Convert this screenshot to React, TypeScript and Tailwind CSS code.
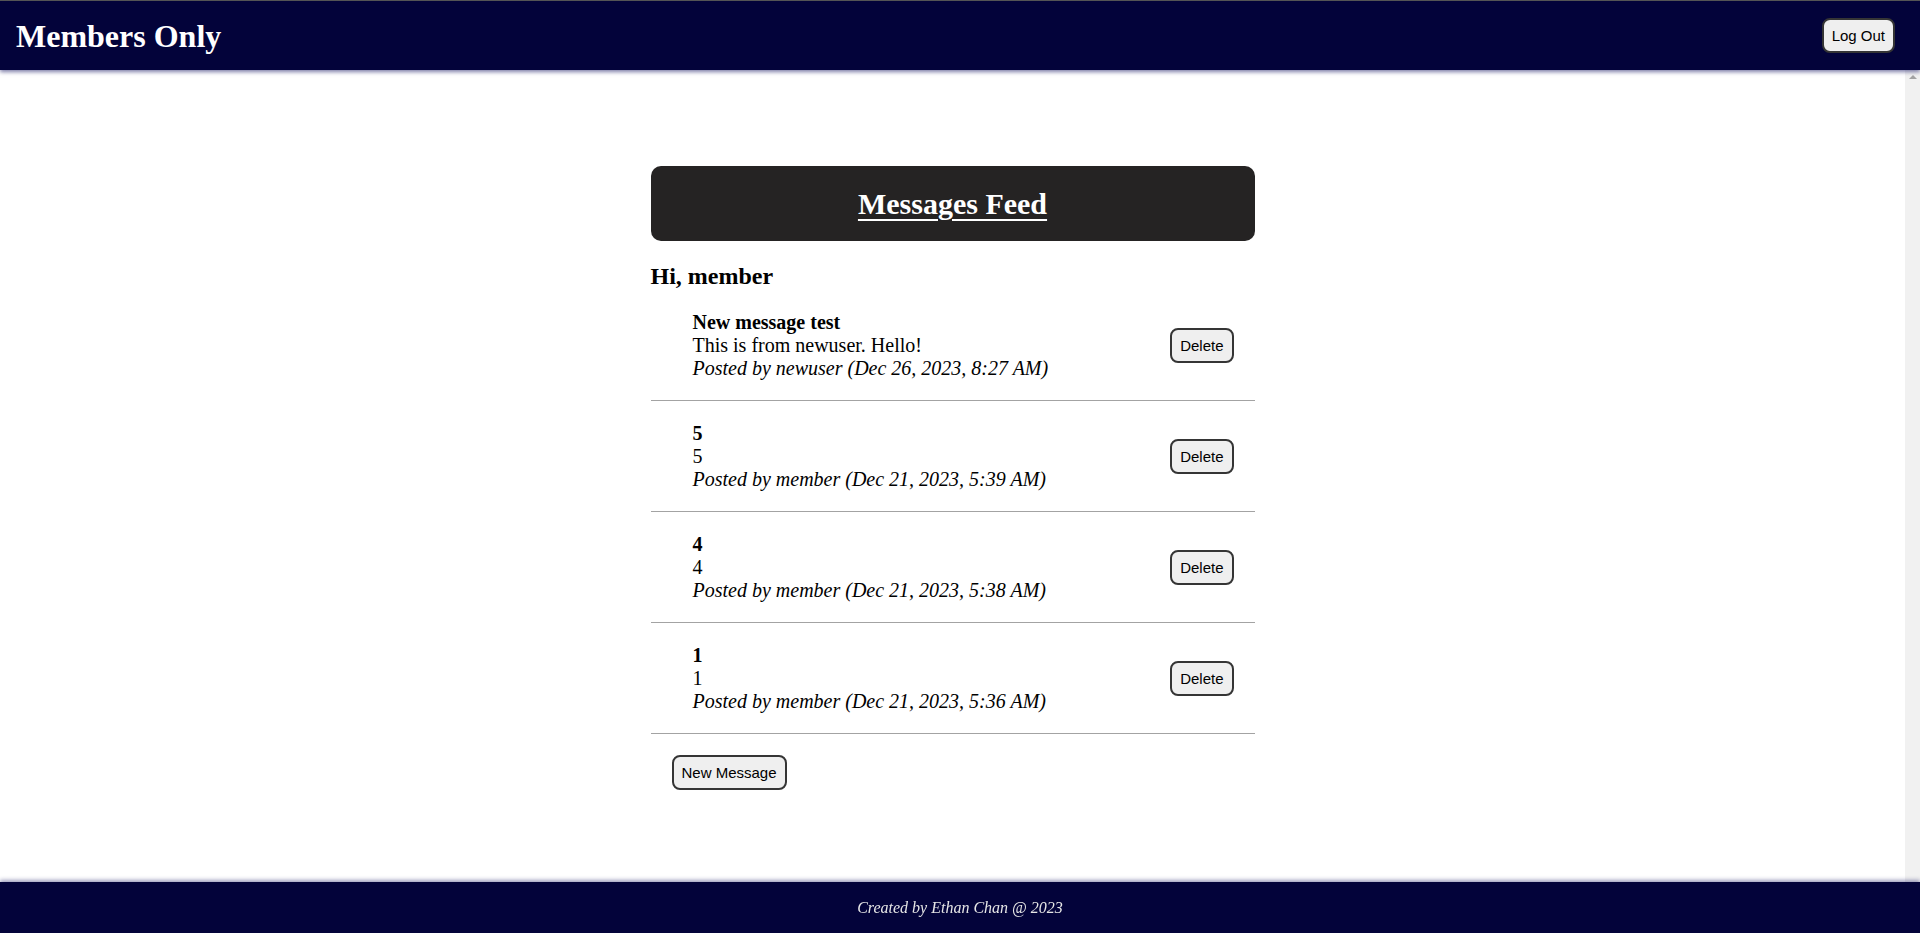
const messages = [
  { id: 1, title: 'New message test', body: 'This is from newuser. Hello!', author: 'newuser', date: 'Dec 26, 2023, 8:27 AM' },
  { id: 2, title: '5', body: '5', author: 'member', date: 'Dec 21, 2023, 5:39 AM' },
  { id: 3, title: '4', body: '4', author: 'member', date: 'Dec 21, 2023, 5:38 AM' },
  { id: 4, title: '1', body: '1', author: 'member', date: 'Dec 21, 2023, 5:36 AM' },
]

const btn =
  "rounded-[8px] border-2 border-[#353535] bg-[#efefef] px-[8px] py-[7px] font-['Liberation_Sans',Arial,sans-serif] text-[15px] leading-[17px] text-black"

function MessageRow({ title, body, author, date }: { title: string; body: string; author: string; date: string }) {
  return (
    <li className="flex items-center justify-between border-b border-[#a3a3a3] pt-[21px] pb-[20px] pl-[42px] pr-[21px]">
      <div className="text-[20px] leading-[23px]">
        <div className="font-bold">{title}</div>
        <div>{body}</div>
        <div className="italic">
          Posted by {author} ({date})
        </div>
      </div>
      <button className={btn}>Delete</button>
    </li>
  )
}

export default function App() {
  return (
    <div className="h-screen overflow-hidden bg-white font-['Liberation_Serif','Times_New_Roman',serif] text-black">
      {/* Header */}
      <header className="relative z-10 flex h-[70px] items-center justify-between border-t border-[#555] bg-[#03033a] pl-4 pr-[25px] shadow-[0_2px_4px_rgba(40,40,110,0.6)]">
        <h1 className="text-[32px] font-bold leading-none text-white">Members Only</h1>
        <button className={btn}>Log Out</button>
      </header>

      {/* Main area + scrollbar track */}
      <div className="flex h-[calc(100vh-70px)]">
        <main className="flex-1 overflow-hidden">
          <div className="mx-auto w-[604px] pt-[96px] pb-[120px]">
            <div className="flex h-[75px] items-center justify-center rounded-[10px] bg-[#252323]">
              <h2 className="text-[30px] font-bold text-white underline decoration-2 underline-offset-[5px]">
                Messages Feed
              </h2>
            </div>

            <h2 className="mt-[22px] text-[24px] font-bold leading-[27px]">Hi, member</h2>

            <ul>
              {messages.map((m) => (
                <MessageRow key={m.id} {...m} />
              ))}
            </ul>

            <button className={`${btn} ml-[21px] mt-[21px]`}>New Message</button>
          </div>
        </main>
        <div className="flex w-[15px] shrink-0 justify-center bg-[#f1f1f1] pt-[5px]">
          <div className="h-0 w-0 border-x-[4px] border-b-[4px] border-x-transparent border-b-[#a3a3a3]" />
        </div>
      </div>

      {/* Footer */}
      <footer className="fixed inset-x-0 bottom-0 z-10 flex h-[51px] items-center justify-center bg-[#03033a] shadow-[0_-2px_4px_rgba(40,40,110,0.45)]">
        <p className="text-[16px] italic text-[#e6e6e6]">Created by Ethan Chan @ 2023</p>
      </footer>
    </div>
  )
}
